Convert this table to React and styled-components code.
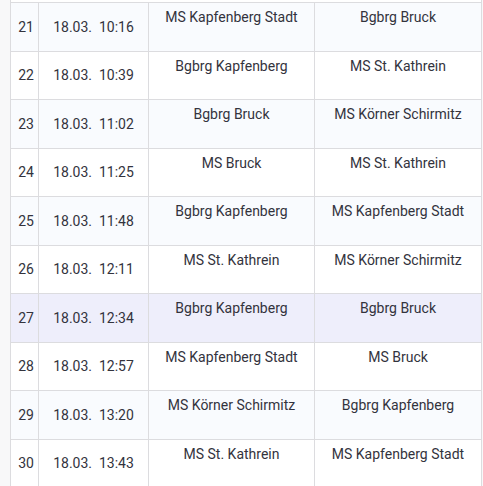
import styled, { createGlobalStyle } from "styled-components";

const GlobalStyle = createGlobalStyle`
    html, body {
        margin: 0;
        padding: 0;
        background: #f8f8f9;
    }
    body {
        font-family: Roboto, "Noto Sans", sans-serif;
        color: #33333d;
    }
`;

const Page = styled.div`
    width: 483px;
    height: 486px;
    overflow: hidden;
    padding-left: 10px;
    box-sizing: border-box;
`;

const Table = styled.div`
    width: 472px;
    border-left: 1px solid #dcdcdf;
    border-right: 1px solid #dcdcdf;
    box-sizing: border-box;
    background: #ffffff;
    padding-top: 2px;
`;

const Row = styled.div`
    display: grid;
    grid-template-columns: 27px 110px 166px 1fr;
    height: 48.5px;
    box-sizing: border-box;
    border-top: 1px solid #dcdcdf;
    background: ${(p) => (p.$hover ? "#eeeefb" : p.$odd ? "#f9fbfe" : "#ffffff")};
`;

const Cell = styled.div`
    display: flex;
    justify-content: center;
    align-items: ${(p) => (p.$top ? "flex-start" : "center")};
    padding-top: ${(p) => (p.$top ? "4px" : "0")};
    padding-left: ${(p) => (p.$first ? "3px" : "0")};
    font-size: 14px;
    line-height: 20px;
    white-space: pre;
    border-left: ${(p) => (p.$first ? "none" : "1px solid #dcdcdf")};
`;

const games = [
    [21, "10:16", "MS Kapfenberg Stadt", "Bgbrg Bruck"],
    [22, "10:39", "Bgbrg Kapfenberg", "MS St. Kathrein"],
    [23, "11:02", "Bgbrg Bruck", "MS Körner Schirmitz"],
    [24, "11:25", "MS Bruck", "MS St. Kathrein"],
    [25, "11:48", "Bgbrg Kapfenberg", "MS Kapfenberg Stadt"],
    [26, "12:11", "MS St. Kathrein", "MS Körner Schirmitz"],
    [27, "12:34", "Bgbrg Kapfenberg", "Bgbrg Bruck"],
    [28, "12:57", "MS Kapfenberg Stadt", "MS Bruck"],
    [29, "13:20", "MS Körner Schirmitz", "Bgbrg Kapfenberg"],
    [30, "13:43", "MS St. Kathrein", "MS Kapfenberg Stadt"],
];

export default function App() {
    return (
        <Page>
            <GlobalStyle />
            <Table>
                {games.map(([nr, time, home, away]) => (
                    <Row key={nr} $odd={nr % 2 === 1} $hover={nr === 27}>
                        <Cell $first>{nr}</Cell>
                        <Cell>{"18.03.  " + time}</Cell>
                        <Cell $top>{home}</Cell>
                        <Cell $top>{away}</Cell>
                    </Row>
                ))}
            </Table>
        </Page>
    );
}
